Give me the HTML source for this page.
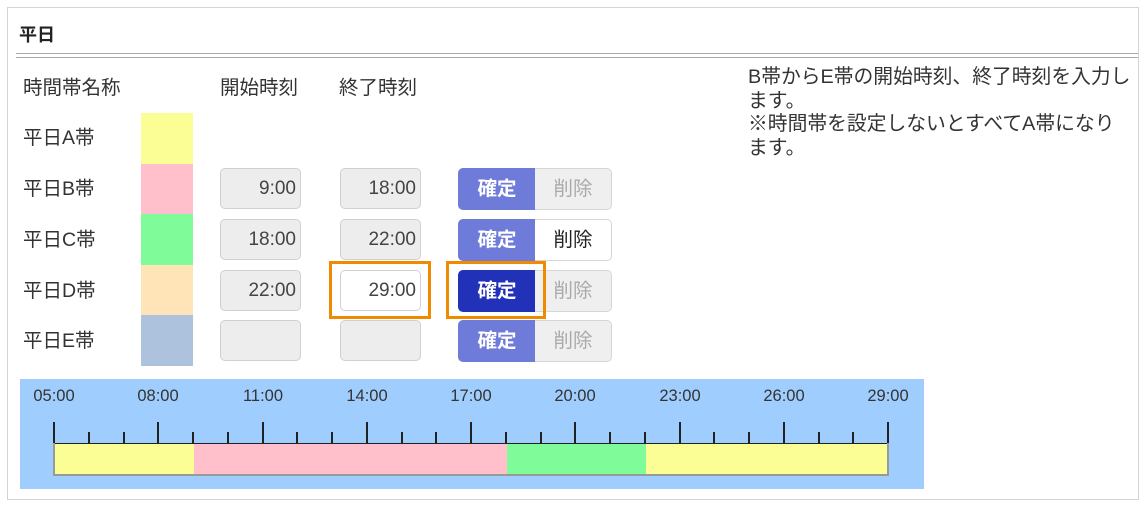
<!DOCTYPE html>
<html><head><meta charset="utf-8"><style>
body{margin:0;background:#fff;font-family:"Liberation Sans","Noto Sans CJK JP",sans-serif;color:#333;}
.a{position:absolute}
.box{left:7px;top:7px;width:1130px;height:491px;border:1px solid #d4d4d4;}
.lbl{font-size:19.5px;color:#333;line-height:24px;}
.sw{left:141px;width:52px;}
.inp{width:81px;height:41px;border:1px solid #d0d0d0;border-radius:5px;background:#ededed;box-sizing:border-box;text-align:right;padding-right:4px;line-height:40px;font-size:19px;color:#444;}
.bc{left:458px;width:78px;height:42px;background:#6f7bd8;color:#fff;border-radius:5px 0 0 5px;text-align:center;line-height:42px;font-size:19.5px;font-weight:bold;}
.bd{left:535px;width:77px;height:42px;box-sizing:border-box;border:1px solid #d6d6d6;border-left:none;background:#efefef;color:#aaa;border-radius:0 5px 5px 0;text-align:center;line-height:40px;font-size:19.5px;}
.tl{font-size:16.5px;color:#333;top:387px;width:60px;text-align:center;}
.tk{width:2px;background:#222;}
</style></head><body>
<div class="a box"></div>
<div class="a" style="left:19px;top:21px;font-size:18px;font-weight:bold;color:#222">平日</div>
<div class="a" style="left:16px;top:53px;width:1122px;height:1px;background:#aaa"></div>
<div class="a" style="left:16px;top:57px;width:1122px;height:1px;background:#aaa"></div>
<div class="a lbl" style="left:23px;top:76px">時間帯名称</div>
<div class="a lbl" style="left:220px;top:76px">開始時刻</div>
<div class="a lbl" style="left:339px;top:76px">終了時刻</div>
<div class="a lbl" style="left:748px;top:66px;line-height:23.7px;width:400px;font-size:19.8px">B帯からE帯の開始時刻、終了時刻を入力し<br>ます。<br>※時間帯を設定しないとすべてA帯になり<br>ます。</div>

<div class="a lbl" style="left:23px;top:126px">平日A帯</div>
<div class="a lbl" style="left:23px;top:177px">平日B帯</div>
<div class="a lbl" style="left:23px;top:228px">平日C帯</div>
<div class="a lbl" style="left:23px;top:279px">平日D帯</div>
<div class="a lbl" style="left:23px;top:329px">平日E帯</div>

<div class="a sw" style="top:113px;height:51px;background:#fafe95"></div>
<div class="a sw" style="top:164px;height:50px;background:#ffc0cb"></div>
<div class="a sw" style="top:214px;height:51px;background:#80fb9a"></div>
<div class="a sw" style="top:265px;height:50px;background:#fee4b7"></div>
<div class="a sw" style="top:315px;height:51px;background:#adc2dc"></div>

<div class="a inp" style="left:220px;top:168px">9:00</div>
<div class="a inp" style="left:340px;top:168px">18:00</div>
<div class="a inp" style="left:220px;top:219px">18:00</div>
<div class="a inp" style="left:340px;top:219px">22:00</div>
<div class="a inp" style="left:220px;top:270px">22:00</div>
<div class="a inp" style="left:340px;top:270px;background:#fff">29:00</div>
<div class="a inp" style="left:220px;top:320px"></div>
<div class="a inp" style="left:340px;top:320px"></div>

<div class="a bc" style="top:168px">確定</div><div class="a bd" style="top:168px">削除</div>
<div class="a bc" style="top:219px">確定</div><div class="a bd" style="top:219px;background:#fff;color:#222">削除</div>
<div class="a bc" style="top:270px;background:#2232b8">確定</div><div class="a bd" style="top:270px">削除</div>
<div class="a bc" style="top:320px">確定</div><div class="a bd" style="top:320px">削除</div>

<div class="a" style="left:329px;top:261px;width:96px;height:52px;border:3px solid #f08a00"></div>
<div class="a" style="left:446px;top:261px;width:94px;height:52px;border:3px solid #f08a00"></div>

<div class="a" style="left:20px;top:379px;width:904px;height:110px;background:#9fcdfd"></div>
<div class="a tl" style="left:24px">05:00</div>
<div class="a tl" style="left:128px">08:00</div>
<div class="a tl" style="left:233px">11:00</div>
<div class="a tl" style="left:337px">14:00</div>
<div class="a tl" style="left:441px">17:00</div>
<div class="a tl" style="left:545px">20:00</div>
<div class="a tl" style="left:650px">23:00</div>
<div class="a tl" style="left:754px">26:00</div>
<div class="a tl" style="left:858px">29:00</div>
<div id="tk"></div>
<div class="a" style="left:54px;top:444px;width:140px;height:30px;background:#fafe95"></div>
<div class="a" style="left:194px;top:444px;width:313px;height:30px;background:#ffc0cb"></div>
<div class="a" style="left:507px;top:444px;width:139px;height:30px;background:#80fb9a"></div>
<div class="a" style="left:646px;top:444px;width:242px;height:30px;background:#fafe95"></div>
<div class="a" style="left:54px;top:443px;width:834px;height:1px;background:#222"></div>
<div class="a" style="left:54px;top:474px;width:834px;height:2px;background:#999"></div>
<div class="a" style="left:53px;top:443px;width:2px;height:33px;background:#999"></div>
<div class="a" style="left:887px;top:443px;width:2px;height:33px;background:#999"></div>
<script>
var h='';for(var i=0;i<=24;i++){var x=Math.round(54+i*34.75)-1;var big=i%3==0;h+='<div class="a tk" style="left:'+x+'px;top:'+(big?422:432)+'px;height:'+(big?22:12)+'px"></div>';}
document.getElementById('tk').innerHTML=h;
</script>
</body></html>
